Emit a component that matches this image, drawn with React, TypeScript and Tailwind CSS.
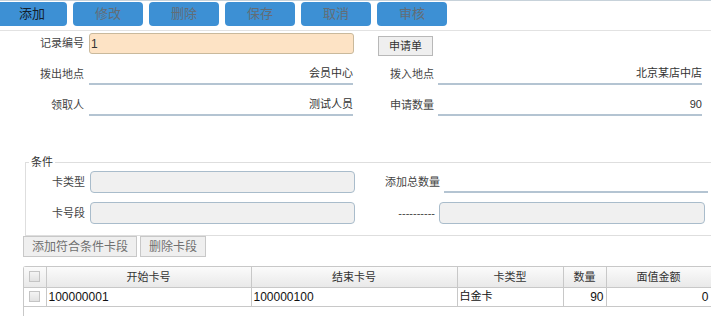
import React from "react";

const FONT = { fontFamily: '"Liberation Sans", "Noto Sans CJK SC", sans-serif' };

function ToolBtn({ label, active }: { label: string; active?: boolean }) {
  return (
    <div
      className={`h-[24px] w-[70px] shrink-0 rounded-[4px] bg-[#3d90d4] flex items-center justify-center text-[13px] ${
        active ? "text-[#15212c]" : "text-[#636d76]"
      }`}
    >
      {label}
    </div>
  );
}

function UnderlineField({ value, w }: { value?: string; w: number }) {
  return (
    <div
      className="h-[22px] border-b-[2px] border-[#b4c4d2] flex items-center justify-end text-[11px] text-[#333]"
      style={{ width: w }}
    >
      {value}
    </div>
  );
}

function GrayBtn({ label, w }: { label: string; w: number }) {
  return (
    <div
      className="h-[21px] border border-[#c8c8c8] bg-[#efefef] flex items-center justify-center text-[12px] text-[#707070]"
      style={{ width: w }}
    >
      {label}
    </div>
  );
}

function Check() {
  return <div className="w-[11px] h-[11px] border border-[#c4c4c4] bg-gradient-to-b from-[#f4f4f4] to-[#e2e2e2] mx-auto" />;
}

export default function App() {
  return (
    <div className="w-[711px] h-[316px] overflow-hidden bg-white text-[#333]" style={FONT}>
      {/* toolbar */}
      <div className="h-[31px] border-t border-[#c7d2da] border-b border-b-[#e2e2e2] flex items-start gap-[6px] pt-[1px] pl-0">
        <div className="-ml-[3px]">
          <ToolBtn label="添加" active />
        </div>
        <ToolBtn label="修改" />
        <ToolBtn label="删除" />
        <ToolBtn label="保存" />
        <ToolBtn label="取消" />
        <ToolBtn label="审核" />
      </div>

      {/* row 1 */}
      <div className="flex items-center mt-[2px] h-[21px]">
        <div className="w-[84px] text-right text-[11px] text-[#444]">记录编号</div>
        <div className="ml-[5px] w-[265px] h-[21px] rounded-[3px] border border-[#c9b99c] bg-[#fde3c5] flex items-center pl-[1px] text-[12px] text-[#333]">
          1
        </div>
        <div className="ml-[24px] mt-[5px] w-[55px] h-[20px] border border-[#b8b8b8] bg-[#efefef] flex items-center justify-center text-[11px] text-[#333]">
          申请单
        </div>
      </div>

      {/* row 2 */}
      <div className="flex items-center mt-[9px]">
        <div className="w-[84px] text-right text-[11px] text-[#444]">拨出地点</div>
        <div className="ml-[5px]">
          <UnderlineField value="会员中心" w={264} />
        </div>
        <div className="w-[81px] text-right text-[11px] text-[#444]">拨入地点</div>
        <div className="ml-[4px]">
          <UnderlineField value="北京某店中店" w={264} />
        </div>
      </div>

      {/* row 3 */}
      <div className="flex items-center mt-[9px]">
        <div className="w-[84px] text-right text-[11px] text-[#444]">领取人</div>
        <div className="ml-[5px]">
          <UnderlineField value="测试人员" w={264} />
        </div>
        <div className="w-[81px] text-right text-[11px] text-[#444]">申请数量</div>
        <div className="ml-[4px]">
          <UnderlineField value="90" w={264} />
        </div>
      </div>

      {/* fieldset */}
      <fieldset className="ml-[25px] mt-[40px] w-[700px] border-l border-t border-b border-[#dedede] pt-[3px] pb-[11px]">
        <legend className="ml-[3px] px-[2px] text-[11px] leading-[12px] text-[#333]">条件</legend>
        <div className="flex items-center">
          <div className="w-[59px] text-right text-[11px] text-[#444]">卡类型</div>
          <div className="ml-[5px] w-[265px] h-[22px] rounded-[4px] border border-[#a9bccb] bg-[#f0f0f0]" />
          <div className="ml-[30px] w-[55px] text-right text-[11px] text-[#444]">添加总数量</div>
          <div className="ml-[4px] -mt-[1px]">
            <UnderlineField w={264} />
          </div>
        </div>
        <div className="flex items-center mt-[9px]">
          <div className="w-[59px] text-right text-[11px] text-[#444]">卡号段</div>
          <div className="ml-[5px] w-[265px] h-[22px] rounded-[4px] border border-[#a9bccb] bg-[#f0f0f0]" />
          <div className="ml-[43px] w-[37px] text-right text-[11px] text-[#444] whitespace-nowrap">----------</div>
          <div className="ml-[4px] w-[266px] h-[22px] rounded-[4px] border border-[#a9bccb] bg-[#f0f0f0]" />
        </div>
      </fieldset>

      {/* buttons */}
      <div className="flex ml-[23px] gap-[3px]">
        <GrayBtn label="添加符合条件卡段" w={114} />
        <GrayBtn label="删除卡段" w={66} />
      </div>

      {/* grid */}
      <div className="ml-[23px] mt-[9px] w-[700px] h-[60px] border-l border-t border-[#c8c8c8] rounded-tl-[3px]">
        <table className="border-collapse table-fixed w-[687px] text-[12px]">
          <colgroup>
            <col className="w-[22px]" />
            <col className="w-[205px]" />
            <col className="w-[206px]" />
            <col className="w-[106px]" />
            <col className="w-[43px]" />
            <col className="w-[105px]" />
          </colgroup>
          <thead>
            <tr className="h-[20px] bg-gradient-to-b from-[#fbfbfb] to-[#e9e9e9] text-[11px] text-[#333]">
              <th className="border-r border-b border-[#c8c8c8] font-normal"><Check /></th>
              <th className="border-r border-b border-[#c8c8c8] font-normal">开始卡号</th>
              <th className="border-r border-b border-[#c8c8c8] font-normal">结束卡号</th>
              <th className="border-r border-b border-[#c8c8c8] font-normal">卡类型</th>
              <th className="border-r border-b border-[#c8c8c8] font-normal">数量</th>
              <th className="border-r border-b border-[#c8c8c8] font-normal">面值金额</th>
            </tr>
          </thead>
          <tbody>
            <tr className="h-[19px] text-[#111]">
              <td className="border-r border-b border-[#c8c8c8]"><Check /></td>
              <td className="border-r border-b border-[#c8c8c8] pl-[2px]">100000001</td>
              <td className="border-r border-b border-[#c8c8c8] pl-[2px]">100000100</td>
              <td className="border-r border-b border-[#c8c8c8] pl-[2px] text-[11px]">白金卡</td>
              <td className="border-r border-b border-[#c8c8c8] pr-[2px] text-right">90</td>
              <td className="border-r border-b border-[#c8c8c8] pr-[2px] text-right">0</td>
            </tr>
          </tbody>
        </table>
      </div>
    </div>
  );
}
